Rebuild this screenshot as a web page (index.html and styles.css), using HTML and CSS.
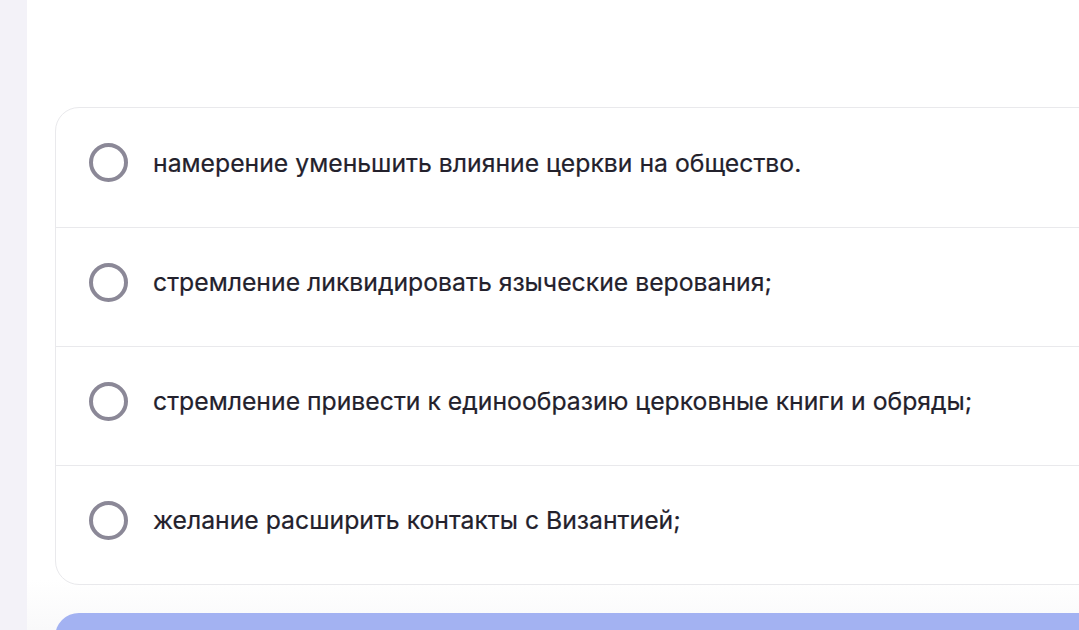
FILE: index.html
```html
<!DOCTYPE html>
<html lang="ru">
<head>
    <meta charset="UTF-8">
    <meta name="viewport" content="width=device-width, initial-scale=1.0">
    <title>Вопрос</title>
    <link rel="stylesheet" href="styles.css">
</head>
<body>

<div class="page">
    <div class="sidebar"></div>

    <main class="content">
        <!-- Answer options -->
        <div class="options">
            <label class="option">
                <input type="radio" name="answer" value="1">
                <span class="option-text">намерение уменьшить влияние церкви на общество.</span>
            </label>
            <label class="option">
                <input type="radio" name="answer" value="2">
                <span class="option-text">стремление ликвидировать языческие верования;</span>
            </label>
            <label class="option">
                <input type="radio" name="answer" value="3">
                <span class="option-text">стремление привести к единообразию церковные книги и обряды;</span>
            </label>
            <label class="option">
                <input type="radio" name="answer" value="4">
                <span class="option-text">желание расширить контакты с Византией;</span>
            </label>
        </div>

        <button class="submit" type="button" aria-label="Ответить"></button>
    </main>
</div>

</body>
</html>
```

FILE: styles.css
```css
body {
    margin: 0;
    font-family: Inter, "Noto Sans", sans-serif;
    background-color: #ffffff;
    overflow: hidden;
}
.page {
    display: flex;
    min-height: 100vh;
}
.sidebar {
    width: 27px;
    flex-shrink: 0;
    background-color: #f3f2f8;
}
.content {
    flex: 1;
    padding: 107px 0 0 28px;
    background: linear-gradient(to bottom, #ffffff 580px, #f9f9fa 630px);
}
.options {
    width: 1100px;
    border: 1px solid #e9e9ec;
    border-radius: 24px;
    background-color: #ffffff;
}
.option {
    display: flex;
    align-items: center;
    height: 119px;
    box-sizing: border-box;
    padding: 0 0 10px 33px;
    border-top: 1px solid #e9e9ec;
    cursor: pointer;
}
.option:first-child {
    border-top: none;
    height: 119px;
}
.option input[type="radio"] {
    appearance: none;
    margin: 0 25px 0 0;
    width: 39px;
    height: 39px;
    border: 4px solid #8b8897;
    border-radius: 50%;
    box-sizing: border-box;
    flex-shrink: 0;
}
.option-text {
    font-size: 24.75px;
    font-weight: 400;
    color: #23212c;
    -webkit-text-stroke: 0.2px #23212c;
}
.submit {
    display: block;
    margin-top: 28px;
    width: 1100px;
    height: 64px;
    border: none;
    border-radius: 24px;
    background-color: #a3b2f2;
}
```
